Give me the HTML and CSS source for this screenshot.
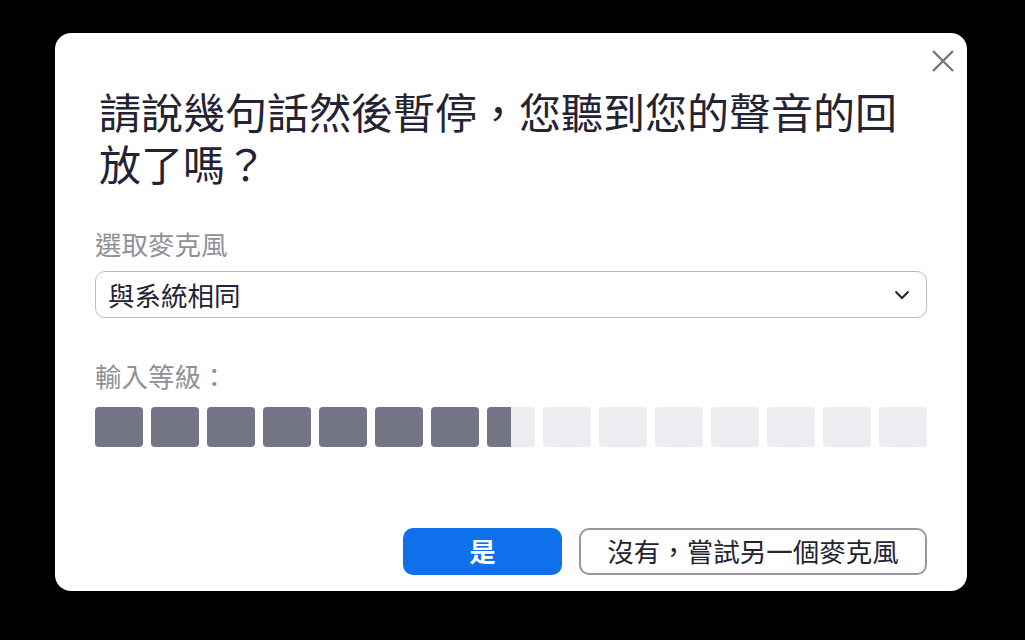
FILE: index.html
```html
<!DOCTYPE html>
<html lang="zh-Hant">
<head>
<meta charset="utf-8">
<link rel="stylesheet" href="styles.css">
</head>
<body>
<div class="dialog">
  <button class="close" aria-label="關閉">
    <svg width="22" height="22" viewBox="0 0 22 22"><path d="M1 1 L21 21 M21 1 L1 21" stroke="#747487" stroke-width="2.4" fill="none"/></svg>
  </button>
  <h1 class="title">請說幾句話然後暫停，您聽到您的聲音的回<br>放了嗎？</h1>
  <div class="label label-mic">選取麥克風</div>
  <div class="select">
    <span>與系統相同</span>
    <svg width="16" height="10" viewBox="0 0 16 10"><path d="M1.5 1.5 L8 8 L14.5 1.5" stroke="#232333" stroke-width="2" fill="none"/></svg>
  </div>
  <div class="label label-level">輸入等級：</div>
  <div class="meter">
    <div class="cell on"></div>
    <div class="cell on"></div>
    <div class="cell on"></div>
    <div class="cell on"></div>
    <div class="cell on"></div>
    <div class="cell on"></div>
    <div class="cell on"></div>
    <div class="cell partial"><div class="fill" style="width:50%"></div></div>
    <div class="cell"></div>
    <div class="cell"></div>
    <div class="cell"></div>
    <div class="cell"></div>
    <div class="cell"></div>
    <div class="cell"></div>
    <div class="cell"></div>
  </div>
  <div class="actions">
    <button class="btn primary">是</button>
    <button class="btn secondary">沒有，嘗試另一個麥克風</button>
  </div>
</div>
</body>
</html>
```

FILE: styles.css
```css
html, body {
  margin: 0;
  padding: 0;
  background: #000;
}
body {
  padding: 33px 0 0 55px;
  width: 1025px;
  height: 640px;
  box-sizing: border-box;
  font-family: "Noto Sans CJK TC", "Noto Sans", sans-serif;
}
.dialog {
  position: relative;
  width: 912px;
  height: 558px;
  box-sizing: border-box;
  background: #fff;
  border-radius: 16px;
  padding: 52px 40px 16px 40px;
  display: flex;
  flex-direction: column;
}
.close {
  position: absolute;
  top: 17px;
  right: 13px;
  width: 22px;
  height: 22px;
  padding: 0;
  border: 0;
  background: none;
  display: flex;
}
.title {
  margin: 0 0 0 4px;
  font-size: 42px;
  font-weight: 400;
  line-height: 52px;
  color: #232333;
}
.label {
  font-size: 26.5px;
  line-height: 32px;
  color: #909099;
}
.label-mic {
  margin-top: 39px;
}
.select {
  margin-top: 11px;
  height: 47px;
  box-sizing: border-box;
  border: 1px solid #babacc;
  border-radius: 10px;
  padding: 0 16px 0 12px;
  display: flex;
  align-items: center;
  justify-content: space-between;
  font-size: 26.5px;
  color: #232333;
}
.label-level {
  margin-top: 42px;
}
.meter {
  margin-top: 15px;
  display: flex;
  gap: 8px;
}
.cell {
  width: 48px;
  height: 40px;
  border-radius: 4px;
  background: #ededf1;
  overflow: hidden;
  display: flex;
}
.cell.on {
  background: #747487;
}
.fill {
  height: 100%;
  background: #747487;
}
.actions {
  margin-top: auto;
  display: flex;
  justify-content: flex-end;
  gap: 17px;
}
.btn {
  height: 47px;
  box-sizing: border-box;
  border-radius: 10px;
  font-family: "Noto Sans CJK TC", "Noto Sans", sans-serif;
  font-size: 26.5px;
  line-height: 1;
  padding: 0;
}
.primary {
  width: 159px;
  background: #0e71eb;
  border: 0;
  color: #fff;
  font-weight: 700;
}
.secondary {
  width: 348px;
  background: #fff;
  border: 2px solid #98989f;
  color: #232333;
}
```
